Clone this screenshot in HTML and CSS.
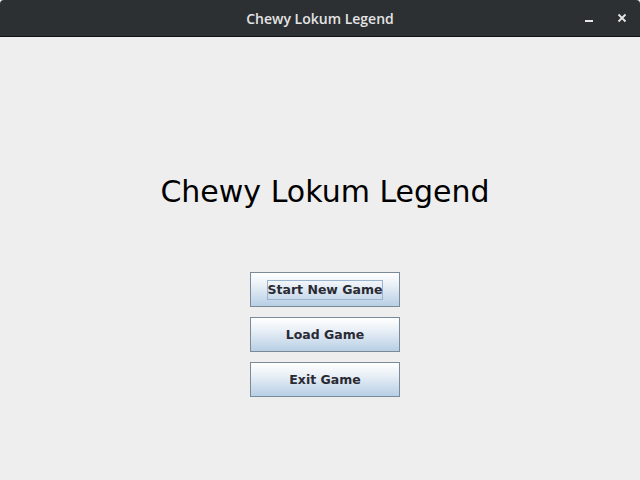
FILE: index.html
```html
<!DOCTYPE html>
<html>
<head>
<meta charset="utf-8">
<link rel="stylesheet" href="styles.css">
</head>
<body>
<div class="window">
  <div class="titlebar">
    <div class="title">Chewy Lokum Legend</div>
    <div class="controls">
      <svg class="ctl" width="12" height="12" viewBox="0 0 12 12"><rect x="2" y="8" width="8" height="2" fill="#e6e6e6"/></svg>
      <svg class="ctl" width="12" height="12" viewBox="0 0 12 12"><path d="M2.5 2.5 L9.5 9.5 M9.5 2.5 L2.5 9.5" stroke="#e6e6e6" stroke-width="1.8"/></svg>
    </div>
  </div>
  <div class="content">
    <h1 class="heading">Chewy Lokum Legend</h1>
    <div class="buttons">
      <button class="btn"><span class="focus">Start New Game</span></button>
      <button class="btn">Load Game</button>
      <button class="btn">Exit Game</button>
    </div>
  </div>
</div>
</body>
</html>
```
FILE: styles.css
```css
html, body {
  margin: 0;
  padding: 0;
  width: 640px;
  height: 480px;
  overflow: hidden;
  background: #eeeeee;
}
.window {
  display: flex;
  flex-direction: column;
  height: 480px;
}
.titlebar {
  height: 36px;
  background: #2c3033;
  border-bottom: 1px solid #111315;
  border-radius: 4px 4px 0 0;
  display: flex;
  align-items: center;
  justify-content: center;
  position: relative;
}
.title {
  font-family: "Open Sans", "DejaVu Sans", sans-serif;
  font-size: 14px;
  font-weight: 600;
  color: #e4e4e4;
}
.controls {
  position: absolute;
  right: 12px;
  top: 12px;
  display: flex;
  gap: 21px;
}
.ctl { display: block; }
.content {
  flex: 1;
  display: flex;
  flex-direction: column;
  align-items: center;
  padding-left: 10px;
}
.heading {
  margin: 137px 0 0 0;
  font-family: "DejaVu Sans", sans-serif;
  font-weight: normal;
  font-size: 30px;
  line-height: 36px;
  color: #000;
}
.buttons {
  margin-top: 62px;
  display: flex;
  flex-direction: column;
  gap: 10px;
}
.btn {
  width: 150px;
  height: 35px;
  margin: 0;
  padding: 0;
  border: 1px solid #7a8a99;
  background: linear-gradient(to bottom, #ffffff 0%, #eef3f8 30%, #b8cfe5 100%);
  font-family: "DejaVu Sans", sans-serif;
  font-weight: bold;
  font-size: 12.5px;
  color: #2a2a33;
  display: flex;
  align-items: center;
  justify-content: center;
}
.focus {
  border: 1px solid #99b4d1;
  padding: 0;
  line-height: 18px;
}
```
